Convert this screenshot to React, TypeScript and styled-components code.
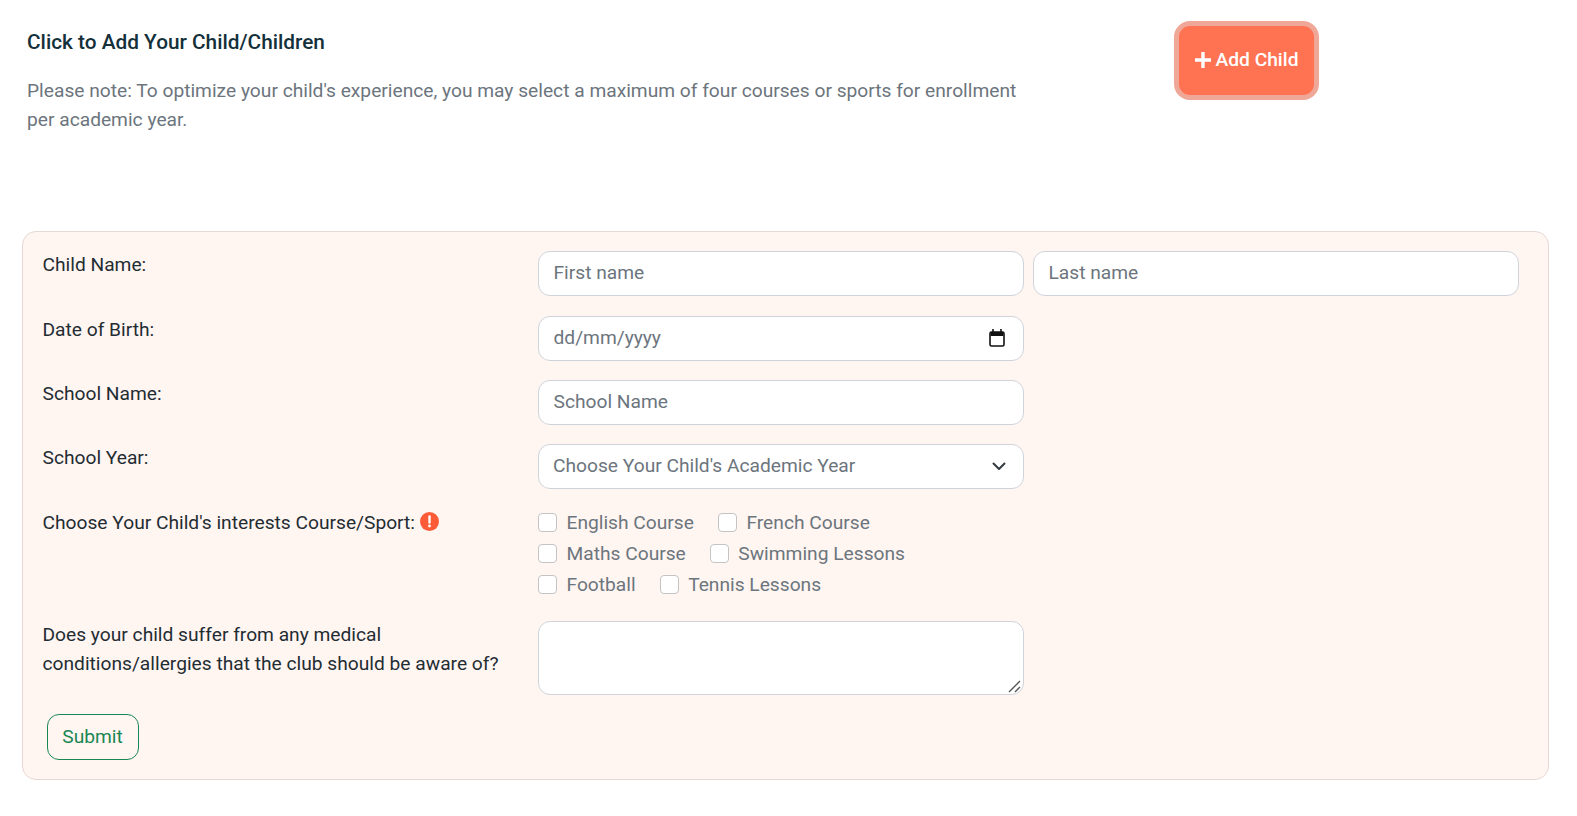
import styled, { createGlobalStyle } from "styled-components";

const GlobalStyle = createGlobalStyle`
  * {
    box-sizing: border-box;
  }

  body {
    margin: 0;
    background: #fff;
    font-family: Roboto, "Liberation Sans", sans-serif;
    font-size: 19.2px;
    line-height: 29px;
    color: #1f2d33;
  }
`;

const Page = styled.div`
  width: 1577px;
  padding: 21px 28px 0 22px;
`;

const Header = styled.div`
  display: flex;
  align-items: flex-start;
  height: 210px;
  padding-left: 5px;
`;

const Intro = styled.div`
  width: 1000px;
  padding-top: 7px;
`;

const Heading = styled.h5`
  margin: 0 0 19px;
  font-size: 20.8px;
  line-height: 29px;
  font-weight: 500;
  color: #14303a;
`;

const Note = styled.p`
  margin: 0;
  color: #6c757d;
`;

const AddButton = styled.button`
  display: flex;
  align-items: center;
  justify-content: center;
  gap: 5px;
  width: 145px;
  height: 79px;
  margin-left: 147px;
  padding: 0 0 2px;
  border: 5px solid #efa797;
  border-radius: 16px;
  background: #ff7352;
  color: #fff;
  font: 500 19.2px/29px Roboto, sans-serif;
`;

const Card = styled.form`
  width: 1527px;
  height: 549px;
  padding: 19px 20px 0 19.5px;
  border: 1px solid #e6d8d5;
  border-radius: 14px;
  background: #fff5f1;
`;

const Row = styled.div<{ $gap: number }>`
  display: flex;
  margin-bottom: ${(p) => p.$gap}px;
`;

const Label = styled.label<{ $top?: number }>`
  display: flex;
  align-items: flex-start;
  gap: 5px;
  flex: 0 0 495.5px;
  margin-top: ${(p) => p.$top ?? -1}px;
  color: #1f2d33;
`;

const Fields = styled.div`
  display: flex;
  gap: 9px;
`;

const FieldWrap = styled.div`
  position: relative;
  width: 486px;
`;

const TextInput = styled.input`
  display: block;
  width: 486px;
  height: 45px;
  padding: 0 14px 2px 14.5px;
  border: 1px solid #ced4da;
  border-radius: 12px;
  background: #fff;
  font: 400 19.2px/29px Roboto, sans-serif;
  color: #6c757d;
  outline: none;

  &::placeholder {
    color: #6c757d;
    opacity: 1;
  }
`;

const Select = styled.select`
  display: block;
  width: 486px;
  height: 45px;
  padding: 0 14px 2px;
  border: 1px solid #ced4da;
  border-radius: 12px;
  background: #fff;
  font: 400 19.2px/29px Roboto, sans-serif;
  color: #6c757d;
  appearance: none;
  outline: none;
`;

const FieldIcon = styled.svg<{ $right: number; $top: number }>`
  position: absolute;
  right: ${(p) => p.$right}px;
  top: ${(p) => p.$top}px;
  pointer-events: none;
`;

const ResizeGrip = styled.svg`
  position: absolute;
  right: 3px;
  bottom: 2px;
  pointer-events: none;
`;

const AlertIcon = styled.svg`
  flex: none;
  margin-top: 4px;
`;

const Checks = styled.div`
  display: flex;
  flex-direction: column;
  gap: 2px;
`;

const CheckRow = styled.div`
  display: flex;
  gap: 24px;
  height: 29px;
`;

const CheckLabel = styled.label`
  display: flex;
  align-items: center;
  gap: 9.5px;
  color: #6c757d;
`;

const Checkbox = styled.input.attrs({ type: "checkbox" })`
  width: 19px;
  height: 19px;
  margin: 0;
  border: 1px solid #c4c4c4;
  border-radius: 4px;
  background: #fff;
  appearance: none;
`;

const TextArea = styled.textarea`
  display: block;
  width: 486px;
  height: 74px;
  padding: 8px 14px;
  border: 1px solid #ced4da;
  border-radius: 12px;
  background: #fff;
  font: 400 19.2px/29px Roboto, sans-serif;
  outline: none;
  resize: none;
`;

const Submit = styled.button`
  display: block;
  width: 92px;
  height: 46px;
  margin-left: 4px;
  padding: 0 0 2px;
  border: 1px solid #198754;
  border-radius: 12px;
  background: transparent;
  color: #198754;
  font: 400 19.2px/29px Roboto, sans-serif;
`;

const courses = [
  ["English Course", "French Course"],
  ["Maths Course", "Swimming Lessons"],
  ["Football", "Tennis Lessons"],
];

export default function App() {
  return (
    <Page>
      <GlobalStyle />
      <Header>
        <Intro>
          <Heading>Click to Add Your Child/Children</Heading>
          <Note>
            Please note: To optimize your child's experience, you may select a maximum of four
            courses or sports for enrollment per academic year.
          </Note>
        </Intro>
        <AddButton type="button">
          <svg width="16" height="16" viewBox="0 0 16 16" fill="none">
            <path d="M8 0v16M0 8h16" stroke="#fff" strokeWidth="3.4" />
          </svg>
          Add Child
        </AddButton>
      </Header>

      <Card>
        <Row $gap={20}>
          <Label>Child Name:</Label>
          <Fields>
            <TextInput placeholder="First name" />
            <TextInput placeholder="Last name" />
          </Fields>
        </Row>
        <Row $gap={19}>
          <Label>Date of Birth:</Label>
          <FieldWrap>
            <TextInput placeholder="dd/mm/yyyy" />
            <FieldIcon $right={19} $top={13} width="16" height="18" viewBox="0 0 16 18" fill="none">
              <path d="M4 0v3M12 0v3" stroke="#111" strokeWidth="1.6" />
              <path d="M1.6 3h12.8v4H1.6z" fill="#111" />
              <rect x="1" y="3" width="14" height="14" rx="1.5" stroke="#111" strokeWidth="1.6" />
            </FieldIcon>
          </FieldWrap>
        </Row>
        <Row $gap={19}>
          <Label>School Name:</Label>
          <TextInput placeholder="School Name" />
        </Row>
        <Row $gap={19}>
          <Label>School Year:</Label>
          <FieldWrap>
            <Select defaultValue="">
              <option value="">Choose Your Child's Academic Year</option>
            </Select>
            <FieldIcon $right={17} $top={14} width="16" height="16" viewBox="0 0 16 16" fill="none">
              <path
                d="M2.5 5.5L8 11l5.5-5.5"
                stroke="#343a40"
                strokeWidth="2"
                strokeLinecap="round"
                strokeLinejoin="round"
              />
            </FieldIcon>
          </FieldWrap>
        </Row>
        <Row $gap={22}>
          <Label $top={0}>
            Choose Your Child's interests Course/Sport:
            <AlertIcon width="19" height="19" viewBox="0 0 19 19">
              <circle cx="9.5" cy="9.5" r="9.5" fill="#fd5b37" />
              <path d="M9.5 4.5v6" stroke="#fff" strokeWidth="2.4" strokeLinecap="round" />
              <circle cx="9.5" cy="14" r="1.4" fill="#fff" />
            </AlertIcon>
          </Label>
          <Checks>
            {courses.map((row) => (
              <CheckRow key={row[0]}>
                {row.map((course) => (
                  <CheckLabel key={course}>
                    <Checkbox />
                    {course}
                  </CheckLabel>
                ))}
              </CheckRow>
            ))}
          </Checks>
        </Row>
        <Row $gap={19}>
          <Label>
            <span>
              Does your child suffer from any medical
              <br />
              conditions/allergies that the club should be aware of?
            </span>
          </Label>
          <FieldWrap>
            <TextArea />
            <ResizeGrip width="13" height="13" viewBox="0 0 13 13" fill="none">
              <path d="M1 12L12 1M7 12l5-5" stroke="#555" strokeWidth="1.4" />
            </ResizeGrip>
          </FieldWrap>
        </Row>
        <Submit type="button">Submit</Submit>
      </Card>
    </Page>
  );
}
